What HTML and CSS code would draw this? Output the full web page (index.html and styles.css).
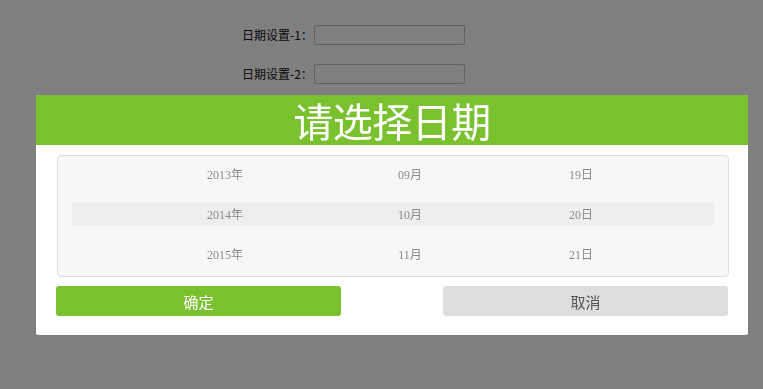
FILE: index.html
```html
<!DOCTYPE html>
<html lang="zh-CN">
<head>
<meta charset="utf-8">
<title>日期选择</title>
<link rel="stylesheet" href="styles.css">
</head>
<body>
<form class="form">
  <div class="field">
    <label class="label">日期设置-1：</label>
    <input class="input" type="text">
  </div>
  <div class="field">
    <label class="label">日期设置-2：</label>
    <input class="input" type="text">
  </div>
</form>

<div class="overlay"></div>

<div class="dialog">
  <div class="dialog-title">请选择日期</div>
  <div class="picker">
    <div class="row">
      <div class="cells">
        <span class="cell c-year">2013年</span>
        <span class="cell c-month">09月</span>
        <span class="cell c-day">19日</span>
      </div>
    </div>
    <div class="row">
      <div class="cells current">
        <span class="cell c-year">2014年</span>
        <span class="cell c-month">10月</span>
        <span class="cell c-day">20日</span>
      </div>
    </div>
    <div class="row">
      <div class="cells">
        <span class="cell c-year">2015年</span>
        <span class="cell c-month">11月</span>
        <span class="cell c-day">21日</span>
      </div>
    </div>
  </div>
  <div class="actions">
    <button class="btn btn-ok" type="button">确定</button>
    <button class="btn btn-cancel" type="button">取消</button>
  </div>
</div>
</body>
</html>
```

FILE: styles.css
```css
html, body {
  margin: 0;
  padding: 0;
}
body {
  width: 763px;
  height: 389px;
  background: #ffffff;
  font-family: "Noto Sans CJK SC", "Noto Sans", sans-serif;
  overflow: hidden;
}
.form {
  padding: 25px 0 0 242px;
  display: flex;
  flex-direction: column;
  gap: 19px;
}
.field {
  display: flex;
  align-items: center;
  height: 20px;
}
.label {
  width: 72px;
  font-size: 12px;
  color: #111;
  line-height: 20px;
  white-space: nowrap;
}
.colon {
  display: inline-block;
}
.input {
  box-sizing: border-box;
  width: 151px;
  height: 20px;
  margin: 0;
  padding: 0 4px;
  border: 1px solid #c4c4c4;
  border-radius: 2px;
  background: #fff;
  outline: none;
}
.overlay {
  position: fixed;
  inset: 0;
  background: rgba(0, 0, 0, 0.5);
}
.dialog {
  position: fixed;
  left: 36px;
  top: 95px;
  width: 712px;
  height: 240px;
  background: #fff;
  border-radius: 2px;
}
.dialog-title {
  height: 50px;
  display: flex;
  align-items: center;
  justify-content: center;
  background: #79c12f;
  border-radius: 2px 2px 0 0;
  color: #fff;
  font-size: 40px;
  line-height: 1;
  letter-spacing: -0.5px;
}
.picker {
  box-sizing: border-box;
  width: 672px;
  height: 122px;
  margin: 10px 0 0 21px;
  padding: 0 14px;
  border: 1px solid #dedede;
  border-radius: 4px;
  background: #f7f7f7;
}
.row {
  height: 40px;
  padding-top: 7px;
  box-sizing: border-box;
}
.cells {
  display: grid;
  grid-template-columns: 306px 64px 1fr;
  height: 22px;
}
.cells.current {
  background: #eeeeee;
}
.cell {
  box-sizing: border-box;
  height: 22px;
  padding-top: 2px;
  line-height: 20px;
  text-align: center;
  font-family: "Liberation Serif", "Noto Sans CJK SC", serif;
  font-size: 12px;
  color: #8a8a8a;
}
.c-day {
  padding-left: 6px;
}
.actions {
  display: flex;
  justify-content: space-between;
  margin: 9px 20px 0 20px;
}
.btn {
  width: 285px;
  height: 30px;
  border: none;
  border-radius: 3px;
  font-family: "Noto Sans CJK SC", "Noto Sans", sans-serif;
  font-size: 15px;
  padding: 0;
  cursor: pointer;
}
.btn-ok {
  background: #79c12f;
  color: #fff;
}
.btn-cancel {
  background: #dcdedd;
  color: #555;
}
```
